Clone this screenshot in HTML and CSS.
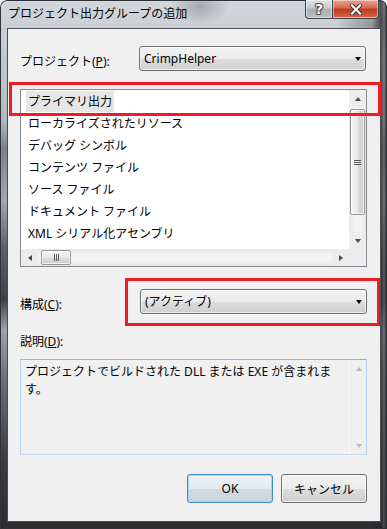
FILE: index.html
```html
<!DOCTYPE html>
<html lang="ja">
<head>
  <meta charset="UTF-8">
  <title>プロジェクト出力グループの追加</title>
  <link rel="stylesheet" href="styles.css">
</head>
<body>

<div class="window">
  <!-- ===== Title bar ===== -->
  <div class="titlebar">
    <span class="title">プロジェクト出力グループの追加</span>
    <div class="caption-btns">
      <span class="cap-btn help">?</span>
      <span class="cap-btn close">
        <svg width="12" height="11" viewBox="0 0 12 11">
          <path d="M2 1.5 L10 9.5 M10 1.5 L2 9.5" stroke="#3a2a26" stroke-width="4" stroke-linecap="square"/>
          <path d="M2 1.5 L10 9.5 M10 1.5 L2 9.5" stroke="#fff" stroke-width="2.2" stroke-linecap="square"/>
        </svg>
      </span>
    </div>
  </div>

  <!-- ===== Client area ===== -->
  <div class="client">
    <div class="field-row">
      <label class="label">プロジェクト(<u>P</u>):</label>
      <div class="combo"><span>CrimpHelper</span><i class="combo-arrow"></i></div>
    </div>

    <div class="listbox">
      <ul class="items">
        <li><span class="sel">プライマリ出力</span></li>
        <li><span>ローカライズされたリソース</span></li>
        <li><span>デバッグ シンボル</span></li>
        <li><span>コンテンツ ファイル</span></li>
        <li><span>ソース ファイル</span></li>
        <li><span>ドキュメント ファイル</span></li>
        <li><span>XML シリアル化アセンブリ</span></li>
      </ul>
      <div class="vscroll">
        <span class="sb-btn"><i class="arr-up"></i></span>
        <div class="v-track"><div class="v-thumb"><i class="grip-h"></i></div></div>
        <span class="sb-btn"><i class="arr-down"></i></span>
      </div>
      <div class="hscroll">
        <span class="sb-btn"><i class="arr-left"></i></span>
        <div class="h-track"><div class="h-thumb"><i class="grip-v"></i></div></div>
        <span class="sb-btn"><i class="arr-right"></i></span>
      </div>
      <div class="corner"></div>
    </div>

    <div class="field-row config">
      <label class="label">構成(<u>C</u>):</label>
      <div class="combo"><span>(アクティブ)</span><i class="combo-arrow"></i></div>
    </div>

    <div class="desc-label">説明(<u>D</u>):</div>
    <div class="desc-box">
      <p class="desc-text">プロジェクトでビルドされた DLL または EXE が含まれま<br>す。</p>
      <div class="vscroll disabled">
        <span class="sb-btn"><i class="arr-up"></i></span>
        <div class="v-track"></div>
        <span class="sb-btn"><i class="arr-down"></i></span>
      </div>
    </div>

    <div class="buttons">
      <button class="btn default">OK</button>
      <button class="btn">キャンセル</button>
    </div>
  </div>

  <!-- annotation boxes drawn over the dialog -->
  <div class="mark mark-list"></div>
  <div class="mark mark-config"></div>
</div>

</body>
</html>
```

FILE: styles.css
```css
* { box-sizing:border-box; margin:0; padding:0; }
body { background:#fff; font:12px "Noto Sans","Noto Sans CJK JP",sans-serif; color:#000; }

/* ===== Window frame ===== */
.window{
  position:relative;width:387px;height:529px;border-radius:7px 7px 0 0;
  display:flex;flex-direction:column;
  box-shadow:inset 0 0 0 1px #303336;
  background:
    radial-gradient(ellipse 30px 18px at 200px 6px,rgba(80,85,90,.35),transparent),
    radial-gradient(ellipse 40px 30px at 375px 26px,rgba(60,62,66,.45),transparent),
    linear-gradient(to right,transparent 372px,rgba(35,37,40,.75) 381px,rgba(90,92,95,.7) 384px,rgba(25,25,25,.85) 387px),
    linear-gradient(to bottom,#d3d7db 0,#c9cdd1 40px,#b4b9be 120px,#7d8186 148px,#a4a8ac 200px,#5d6064 248px,#3f4245 300px,#9fa3a7 330px,#6c7074 380px,#3a3c3f 460px,#2b2d30 529px);
}
.titlebar{ height:28px;display:flex;align-items:flex-start; }
.title{ line-height:28px;padding-left:8px;color:#000; }
.caption-btns{ display:flex;margin-left:auto;margin-right:8px; }
.cap-btn{
  height:19px;display:flex;align-items:center;justify-content:center;
  border:1px solid #3d4146;border-top:none;
  box-shadow:inset 0 0 0 1px rgba(255,255,255,.45);
}
.help{
  width:27px;border-radius:0 0 0 4px;border-right:none;
  background:linear-gradient(#dde1e5,#c7ccd1 45%,#a9afb5 50%,#b9bec3);
  color:#fff;font:bold 14px "DejaVu Sans",sans-serif;
  text-shadow:0 0 1px #333,1px 1px 0 #555,-1px -1px 0 #555,1px -1px 0 #555,-1px 1px 0 #555;
}
.close{
  width:47px;border-radius:0 0 4px 0;
  background:linear-gradient(#e8a595,#d4664d 45%,#c23b1f 50%,#d05a3b 90%,#e08a6a);
}

/* ===== Client area ===== */
.client{
  height:494px;margin:0 6px 0 7px;background:#f0f0f0;
  border:1px solid #4a4d52;padding:17px 13px 0 12px;
}
.field-row{ display:flex;height:25px; }
.label{ width:119px;line-height:18px;margin-top:7px; }
.config .label{ width:120px; }
.combo{
  width:227px;height:25px;display:flex;align-items:center;padding-left:4px;
  border:1px solid #707070;border-radius:3px;
  background:linear-gradient(#f2f2f2,#ebebeb 50%,#dddddd 51%,#cfcfcf);
  box-shadow:inset 0 0 0 1px rgba(255,255,255,.6);
}
.combo span{ line-height:18px; }
.combo-arrow{
  margin-left:auto;margin-right:4px;width:0;height:0;
  border-left:3.5px solid transparent;border-right:3.5px solid transparent;border-top:4px solid #000;
}

/* ===== List box ===== */
.listbox{
  margin-top:18px;height:178px;border:1px solid #828790;background:#fff;
  display:grid;grid-template-columns:1fr 17px;grid-template-rows:1fr 17px;
}
.items{ list-style:none;padding:1px 0 0 5px;overflow:hidden; }
.items li{ height:22px;line-height:21px;white-space:nowrap; }
.items span{ display:inline-block;padding:0 2px;height:21px; }
.items .sel{ background:#e6e6e6; }

/* ===== Scroll bars ===== */
.vscroll{ display:flex;flex-direction:column;background:#ececec; }
.hscroll{ display:flex;background:#ececec; }
.corner{ background:#ececec; }
.sb-btn{ width:17px;height:17px;flex:none;display:flex;align-items:center;justify-content:center; }
.sb-btn i{ width:0;height:0; }
.arr-up{ border-left:3.5px solid transparent;border-right:3.5px solid transparent;border-bottom:4px solid #4a4a4a; }
.arr-down{ border-left:3.5px solid transparent;border-right:3.5px solid transparent;border-top:4px solid #4a4a4a; }
.arr-left{ border-top:3.5px solid transparent;border-bottom:3.5px solid transparent;border-right:4px solid #4a4a4a; }
.arr-right{ border-top:3.5px solid transparent;border-bottom:3.5px solid transparent;border-left:4px solid #4a4a4a; }
.v-track{ flex:1;background:linear-gradient(to right,#e6e6e6,#f3f3f3 30%,#f3f3f3 70%,#e6e6e6); }
.h-track{ flex:1;background:linear-gradient(#e6e6e6,#f3f3f3 30%,#f3f3f3 70%,#e6e6e6); }
.v-thumb{
  margin:2px 0 0 1px;width:15px;height:106px;border:1px solid #979797;border-radius:2px;
  background:linear-gradient(to right,#f4f4f4,#e8e8e8 50%,#d9d9d9 51%,#d0d0d0);
  box-shadow:inset 0 0 0 1px rgba(255,255,255,.7);
  display:flex;align-items:center;justify-content:center;
}
.h-thumb{
  margin:1px 0 0 3px;width:30px;height:15px;border:1px solid #979797;border-radius:2px;
  background:linear-gradient(#f4f4f4,#e8e8e8 50%,#d9d9d9 51%,#d0d0d0);
  box-shadow:inset 0 0 0 1px rgba(255,255,255,.7);
  display:flex;align-items:center;justify-content:center;
}
.grip-h{ width:7px;height:5px;background:repeating-linear-gradient(#5a5a5a 0 1px,transparent 1px 2px); }
.grip-v{ width:5px;height:7px;background:repeating-linear-gradient(to right,#5a5a5a 0 1px,transparent 1px 2px); }
.vscroll.disabled{ background:#efefef;border-left:1px solid #f7f7f7; }
.vscroll.disabled .v-track{ background:#efefef; }
.vscroll.disabled .arr-up{ border-bottom-color:#b8b8b8; }
.vscroll.disabled .arr-down{ border-top-color:#b8b8b8; }

/* ===== Configuration / description ===== */
.config{ margin-top:22px; }
.desc-label{ margin-top:19px;line-height:18px; }
.desc-box{
  margin-top:8px;height:96px;background:#f0f0f0;
  border:1px solid;border-color:#8cb4dc #b7d2ec #c6ddf1 #b7d2ec;
  display:grid;grid-template-columns:1fr 17px;
}
.desc-text{ padding:3px 0 0 4px;line-height:18px;white-space:nowrap; }

/* ===== Buttons ===== */
.buttons{ margin-top:19px;display:flex;justify-content:flex-end;gap:8px; }
.btn{
  width:86px;height:29px;font:inherit;color:#000;cursor:pointer;
  border:1px solid #707070;border-radius:3px;
  background:linear-gradient(#f2f2f2,#ebebeb 50%,#dddddd 51%,#cfcfcf);
  box-shadow:inset 0 0 0 1px rgba(255,255,255,.7);
}
.btn.default{
  border-color:#3c8dc8;
  background:linear-gradient(#eef3f7,#e3e9ee 50%,#d3dbe2 51%,#c9d3dc);
  box-shadow:inset 0 0 0 1px #9fd8f5;
}

/* ===== Red annotation boxes ===== */
.mark{ position:absolute;border:3px solid #ee1c24; }
.mark-list{ left:9px;top:82px;width:372px;height:34px; }
.mark-config{ left:125px;top:278px;width:255px;height:48px; }
```
